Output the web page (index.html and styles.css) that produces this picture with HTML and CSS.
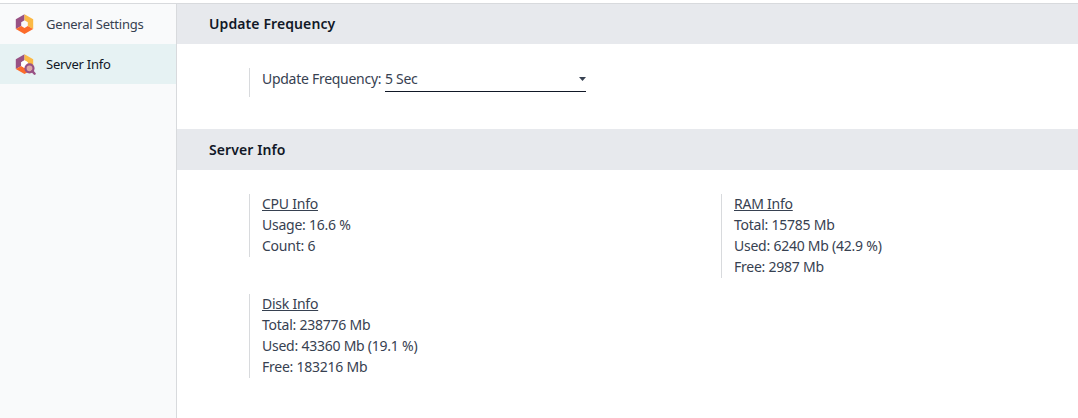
FILE: index.html
```html
<!DOCTYPE html>
<html lang="en">
<head>
<meta charset="utf-8">
<title>Settings</title>
<link rel="stylesheet" href="styles.css">
</head>
<body>
<div class="settings">
  <nav class="sidebar">
    <a class="tab">
      <svg class="tab-icon" viewBox="0 0 22 22">
        <path fill="#985184" d="M10.500 1.300 1.800 6.200v9.800l5.400-3V9.200l3.300-2z"/>
        <path fill="#fbb945" d="M10.500 1.300l8.700 4.900v9.800l-5.400-3V9.200l-3.300-2z"/>
        <path fill="#fc6b2a" d="M1.800 16 7.200 13l3.300 2 3.300-2 5.400 3-8.700 5z"/>
      </svg>
      <span>General Settings</span>
    </a>
    <a class="tab selected">
      <svg class="tab-icon" viewBox="0 0 22 22">
        <path fill="#985184" d="M10.500 1.300 1.800 6.200v9.800l5.400-3V9.200l3.300-2z"/>
        <path fill="#fbb945" d="M10.500 1.300l8.700 4.900v9.800l-5.400-3V9.200l-3.300-2z"/>
        <path fill="#fc6b2a" d="M1.800 16 7.200 13l3.300 2 3.300-2 5.400 3-8.700 5z"/>
        <path fill="#fff" d="M10.500 7.200 7.200 9.200V13l3.300 2 3.300-2V9.200z"/>
        <circle cx="15.500" cy="15.300" r="4" fill="#dca6a6" stroke="#985184" stroke-width="2.200"/>
        <path d="M18.300 18.100l2.300 2.600" stroke="#985184" stroke-width="2.400" stroke-linecap="round"/>
      </svg>
      <span class="tab-name">Server Info</span>
    </a>
  </nav>
  <main class="content">
    <h2 class="section-title update">Update Frequency</h2>
    <div class="section frequency">
      <div class="box frequency-box">
        <label class="label">Update Frequency:</label>
        <div class="select"><span>5 Sec</span><svg class="caret" viewBox="0 0 7 4"><path d="M0 0h7L3.500 4z" fill="#374151"/></svg></div>
      </div>
    </div>
    <h2 class="section-title">Server Info</h2>
    <div class="section grid">
      <div class="box info">
        <div><u>CPU Info</u></div>
        <div>Usage: 16.6 %</div>
        <div>Count: 6</div>
      </div>
      <div class="box info">
        <div><u>RAM Info</u></div>
        <div>Total: 15785 Mb</div>
        <div>Used: 6240 Mb (42.9 %)</div>
        <div>Free: 2987 Mb</div>
      </div>
      <div class="box info">
        <div><u>Disk Info</u></div>
        <div>Total: 238776 Mb</div>
        <div>Used: 43360 Mb (19.1 %)</div>
        <div>Free: 183216 Mb</div>
      </div>
    </div>
  </main>
</div>
</body>
</html>
```
FILE: styles.css
```css
* { box-sizing: border-box; }
body {
  margin: 0;
  padding-top: 3px;
  background: #fff;
  color: #374151;
  font: 14px/21px "Noto Sans", sans-serif;
  letter-spacing: -0.28px;
}
.settings {
  display: flex;
  height: 415px;
  border-top: 1px solid #d8dadd;
}
.sidebar {
  flex: 0 0 177px;
  background: #f9fafb;
  border-right: 1px solid #d8dadd;
}
.tab {
  display: flex;
  align-items: center;
  height: 40px;
  padding-left: 14px;
  font-size: 13px;
  letter-spacing: -0.2px;
}
.tab.selected { background: #e6f2f3; color: #111827; }
.tab-icon { width: 22px; height: 22px; margin-right: 10px; }
.tab.selected .tab-name { letter-spacing: -0.25px; }
.content { flex: 1; }
.section-title {
  height: 41px;
  margin: 0;
  padding-left: 32px;
  background: #e7e9ed;
  color: #111827;
  font-size: 14px;
  font-weight: 600;
  line-height: 42px;
  letter-spacing: 0.1px;
}
.section-title.update { height: 40px; line-height: 40px; }
.section { padding: 24px 0 0 72px; }
.frequency { height: 85px; }
.box {
  justify-self: start;
  align-self: start;
  padding-left: 12px;
  border-left: 1px solid #d8dadd;
}
.info { padding-bottom: 1px; }
.info > :first-child { margin-top: -1px; }
.info { letter-spacing: -0.24px; }
.frequency-box { display: flex; height: 29px; }
.label { width: 123px; white-space: nowrap; }
.select {
  display: flex;
  align-items: center;
  justify-content: space-between;
  width: 201px;
  height: 24px;
  padding-bottom: 2px;
  border-bottom: 1px solid #111827;
}
.caret { width: 7px; height: 4px; }
.grid {
  display: grid;
  grid-template-columns: 472px 1fr;
  row-gap: 16px;
}
```
